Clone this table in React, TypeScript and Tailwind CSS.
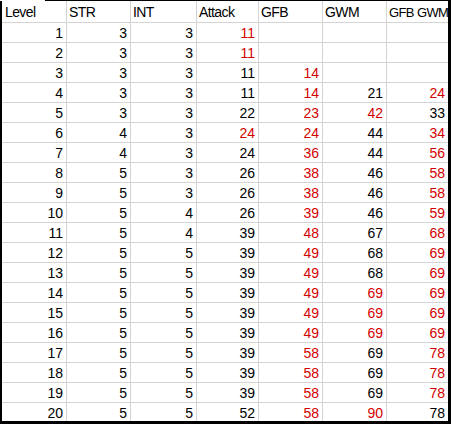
import React from "react";

type Cell = [string, boolean];
const r = (v: string): Cell => [v, true];
const b = (v: string): Cell => [v, false];
const e: Cell = ["", false];

const rows: Cell[][] = [
  [b("1"), b("3"), b("3"), r("11"), e, e, e],
  [b("2"), b("3"), b("3"), r("11"), e, e, e],
  [b("3"), b("3"), b("3"), b("11"), r("14"), e, e],
  [b("4"), b("3"), b("3"), b("11"), r("14"), b("21"), r("24")],
  [b("5"), b("3"), b("3"), b("22"), r("23"), r("42"), b("33")],
  [b("6"), b("4"), b("3"), r("24"), r("24"), b("44"), r("34")],
  [b("7"), b("4"), b("3"), b("24"), r("36"), b("44"), r("56")],
  [b("8"), b("5"), b("3"), b("26"), r("38"), b("46"), r("58")],
  [b("9"), b("5"), b("3"), b("26"), r("38"), b("46"), r("58")],
  [b("10"), b("5"), b("4"), b("26"), r("39"), b("46"), r("59")],
  [b("11"), b("5"), b("4"), b("39"), r("48"), b("67"), r("68")],
  [b("12"), b("5"), b("5"), b("39"), r("49"), b("68"), r("69")],
  [b("13"), b("5"), b("5"), b("39"), r("49"), b("68"), r("69")],
  [b("14"), b("5"), b("5"), b("39"), r("49"), r("69"), r("69")],
  [b("15"), b("5"), b("5"), b("39"), r("49"), r("69"), r("69")],
  [b("16"), b("5"), b("5"), b("39"), r("49"), r("69"), r("69")],
  [b("17"), b("5"), b("5"), b("39"), r("58"), b("69"), r("78")],
  [b("18"), b("5"), b("5"), b("39"), r("58"), b("69"), r("78")],
  [b("19"), b("5"), b("5"), b("39"), r("58"), b("69"), r("78")],
  [b("20"), b("5"), b("5"), b("52"), r("58"), r("90"), b("78")],
];

const widths = ["w-[65px]", "w-[64px]", "w-[66px]", "w-[62px]", "w-[64px]", "w-[64px]", "w-[61px]"];
const headers = ["Level", "STR", "INT", "Attack", "GFB", "GWM", "GFB GWM"];

export default function App() {
  return (
    <div
      className="w-[451px] h-[424px] bg-white flex flex-col overflow-hidden text-[14px] text-black"
      style={{ fontFamily: '"Liberation Sans", Arial, sans-serif' }}
    >
      <div className="h-[1px] ml-[45px] bg-black shrink-0" />
      <div className="flex flex-col border-l-2 border-r-[3px] border-b-[3px] border-black">
        <div className="flex h-[22px] border-b border-[#d4d4d4]">
          {headers.map((h, i) => (
            <div
              key={h}
              className={`${widths[i]} ${i < 6 ? "border-r border-[#d4d4d4]" : "text-[13px] pl-[1px]"} shrink-0 pl-[2px] whitespace-nowrap overflow-hidden leading-[21px] pt-[1px] tracking-[-0.6px]`}
            >
              {i === 0 ? <span className="pl-[1px]">{h}</span> : h}
            </div>
          ))}
        </div>
        {rows.map((row, ri) => (
          <div
            key={ri}
            className={`flex ${ri < rows.length - 1 ? "h-[20px] border-b" : "h-[18px]"} border-[#d4d4d4]`}
          >
            {row.map(([v, red], ci) => (
              <div
                key={ci}
                className={`${widths[ci]} ${ci < 6 ? "border-r border-[#d4d4d4]" : ""} shrink-0 text-right pr-[3px] leading-[20px] ${red ? "text-[#d40000]" : "text-black"}`}
              >
                {v}
              </div>
            ))}
          </div>
        ))}
      </div>
    </div>
  );
}
